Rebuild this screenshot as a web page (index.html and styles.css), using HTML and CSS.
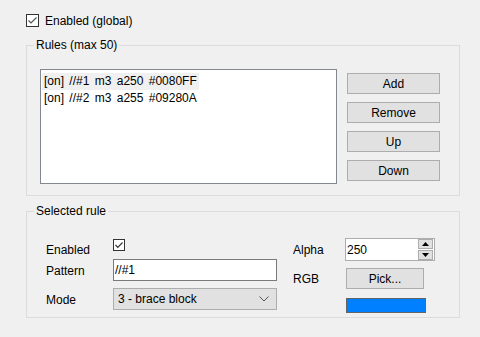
FILE: index.html
```html
<!DOCTYPE html>
<html lang="en">
<head>
    <meta charset="UTF-8">
    <title>Color rules</title>
    <link rel="stylesheet" href="styles.css">
</head>
<body>
    <div class="dialog">
        <label class="global-row">
            <span class="check">
                <svg width="13" height="13" viewBox="0 0 13 13"><rect x="0.5" y="0.5" width="12" height="12" fill="#fff" stroke="#333"/><path d="M2.5 6.5 L5 9 L10.5 3.5" fill="none" stroke="#555" stroke-width="1.2"/></svg>
            </span>
            <span>Enabled (global)</span>
        </label>

        <fieldset class="group rules">
            <legend>Rules (max 50)</legend>
            <div class="rules-body">
                <div class="listbox">
                    <div class="item"><span class="sel">[on] //#1 m3 a250 #0080FF</span></div>
                    <div class="item"><span>[on] //#2 m3 a255 #09280A</span></div>
                </div>
                <div class="buttons">
                    <button class="btn">Add</button>
                    <button class="btn">Remove</button>
                    <button class="btn">Up</button>
                    <button class="btn">Down</button>
                </div>
            </div>
        </fieldset>

        <fieldset class="group selected">
            <legend>Selected rule</legend>
            <div class="selected-body">
                <div class="col left-col">
                    <div class="row enabled-row">
                        <span class="lbl">Enabled</span>
                        <span class="check small">
                            <svg width="12" height="12" viewBox="0 0 12 12"><rect x="0.5" y="0.5" width="11" height="11" fill="#fff" stroke="#333"/><path d="M2.5 6 L4.8 8.3 L9.5 3.5" fill="none" stroke="#333" stroke-width="1.2"/></svg>
                        </span>
                    </div>
                    <div class="row">
                        <span class="lbl">Pattern</span>
                        <input class="textbox" type="text" value="//#1">
                    </div>
                    <div class="row mode-row">
                        <span class="lbl">Mode</span>
                        <div class="combo">
                            <span>3 - brace block</span>
                            <svg width="10" height="6" viewBox="0 0 10 6"><path d="M0.5 0.5 L5 5 L9.5 0.5" fill="none" stroke="#555" stroke-width="1"/></svg>
                        </div>
                    </div>
                </div>
                <div class="col right-col">
                    <div class="row">
                        <span class="lbl short">Alpha</span>
                        <div class="spin">
                            <span class="spin-value">250</span>
                            <div class="spin-btns">
                                <span class="spin-btn"><svg width="7" height="4" viewBox="0 0 7 4"><path d="M0 4 L3.5 0 L7 4 Z" fill="#000"/></svg></span>
                                <span class="spin-btn"><svg width="7" height="4" viewBox="0 0 7 4"><path d="M0 0 L3.5 4 L7 0 Z" fill="#000"/></svg></span>
                            </div>
                        </div>
                    </div>
                    <div class="row pick-row">
                        <span class="lbl short">RGB</span>
                        <button class="btn pick">Pick...</button>
                    </div>
                    <div class="row swatch-row">
                        <span class="lbl short"></span>
                        <div class="swatch" style="background-color: #0080FF;"></div>
                    </div>
                </div>
            </div>
        </fieldset>
    </div>
</body>
</html>
```

FILE: styles.css
```css
body {
    margin: 0;
    background-color: #f0f0f0;
    font-family: "Liberation Sans", Arial, sans-serif;
    font-size: 12px;
    color: #000;
}

.dialog {
    width: 480px;
    height: 337px;
    padding: 14px 0 0 26px;
    box-sizing: border-box;
}

.global-row {
    display: flex;
    align-items: center;
    gap: 6px;
    height: 13px;
}

.check {
    display: flex;
}

.check svg {
    display: block;
}

.group {
    margin: 0;
    padding: 0;
    width: 434px;
    box-sizing: border-box;
    border: 1px solid #dcdcdc;
    min-width: 0;
}

.group legend {
    margin-left: 7px;
    padding: 0 2px;
    line-height: 16px;
}

.rules {
    margin-top: 10px;
}

.rules-body {
    display: flex;
    padding: 16px 0 11px 13px;
}

.listbox {
    width: 297px;
    height: 115px;
    box-sizing: border-box;
    border: 1px solid #828790;
    background-color: #fff;
    padding: 3px 1px 0;
}

.item {
    height: 17px;
    line-height: 17px;
    white-space: pre;
    word-spacing: 2px;
}

.item span {
    display: inline-block;
    padding: 0 2px;
}

.item .sel {
    background-color: #f0f0f0;
}

.buttons {
    display: flex;
    flex-direction: column;
    gap: 8px;
    margin: 4px 0 0 10px;
}

.btn {
    width: 93px;
    height: 21px;
    padding: 0;
    border: 1px solid #adadad;
    background-color: #e1e1e1;
    font-family: inherit;
    font-size: 12px;
    color: #000;
}

.selected {
    margin-top: 7px;
    height: 115px;
}

.selected-body {
    display: flex;
    padding: 19px 0 0 19px;
}

.col {
    display: flex;
    flex-direction: column;
}

.row {
    display: flex;
    align-items: center;
}

.lbl {
    width: 67px;
    flex-shrink: 0;
    padding-top: 1px;
}

.lbl.short {
    width: 52px;
}

.left-col {
    padding-top: 1px;
}

.enabled-row {
    height: 20px;
    align-items: flex-start;
}

.enabled-row .lbl {
    padding-top: 4px;
}

.textbox {
    width: 164px;
    height: 22px;
    box-sizing: border-box;
    border: 1px solid #7a7a7a;
    background-color: #fff;
    padding: 0 1px;
    font-family: inherit;
    font-size: 12px;
    color: #000;
}

.mode-row {
    margin-top: 7px;
}

.combo {
    width: 164px;
    height: 22px;
    box-sizing: border-box;
    border: 1px solid #adadad;
    background-color: #e1e1e1;
    display: flex;
    align-items: center;
    justify-content: space-between;
    padding: 0 7px 0 4px;
}

.right-col {
    margin-left: 16px;
}

.spin {
    width: 90px;
    height: 23px;
    box-sizing: border-box;
    border: 1px solid #adadad;
    background-color: #fff;
    display: flex;
    align-items: center;
    justify-content: space-between;
    padding: 0 1px 0 1px;
}

.spin-btns {
    display: flex;
    flex-direction: column;
    gap: 1px;
}

.spin-btn {
    width: 13px;
    height: 8px;
    border: 1px solid #adadad;
    background-color: #e1e1e1;
    display: flex;
    align-items: center;
    justify-content: center;
}

.spin-btn svg {
    display: block;
}

.pick-row {
    margin-top: 7px;
}

.btn.pick {
    width: 78px;
    margin-left: 1px;
}

.swatch-row {
    margin-top: 9px;
}

.swatch {
    width: 80px;
    height: 15px;
    box-sizing: border-box;
    margin-left: 1px;
    border: 1px solid #646464;
}
```
